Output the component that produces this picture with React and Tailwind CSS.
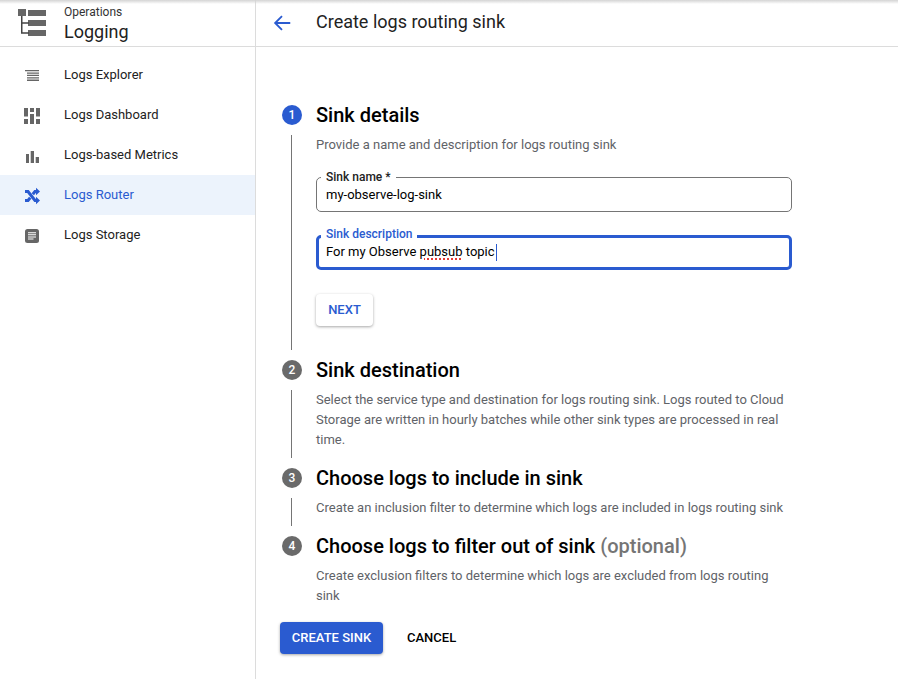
const NAV = [
  { label: 'Logs Explorer', icon: 'explorer' },
  { label: 'Logs Dashboard', icon: 'dashboard' },
  { label: 'Logs-based Metrics', icon: 'metrics' },
  { label: 'Logs Router', icon: 'router', active: true },
  { label: 'Logs Storage', icon: 'storage' },
];

function NavIcon({ name }) {
  const shapes = {
    explorer: <path d="M3 5h14v1.300H3zM5 7.400h12v1.300H5zM5 9.800h12v1.300H5zM5 12.200h12v1.300H5zM5 14.600h12v1.300H5z" />,
    dashboard: <path d="M2 3h4v8.500H2zM2 14h4v5H2zM8 3h4v4H8zM8 9h4v10H8zM14 3h4v8.500h-4zM14 14h4v5h-4z" />,
    metrics: <path d="M4 9h3v9H4zM8.700 6H12v12H8.700zM13.700 12H17v6h-3.300z" />,
    router: (
      <g>
        <path d="M3 6.500h3l7 9h2M3 15.500h3l2.200-2.800M10.800 9.300 13 6.500h2" fill="none" stroke="currentColor" strokeWidth="3" />
        <path d="M14 2.800 18 6.500l-4 3.700zM14 11.800l4 3.700-4 3.700z" />
      </g>
    ),
    storage: (
      <g>
        <rect x="3" y="4" width="14" height="14" rx="2.500" />
        <path d="M6 7.200h8v1H6zM6 9.300h8v1H6zM6 11.400h8v1H6zM6 13.500h5.500v1H6z" fill="#fff" />
      </g>
    ),
  };
  return <svg width="20" height="20" viewBox="0 0 20 20" fill="currentColor">{shapes[name]}</svg>;
}

function Step({ n, title, optional, active, last, children }) {
  return (
    <div className="flex gap-[14px]">
      <div className="flex w-[20px] flex-col items-start">
        <div className={`flex h-[20px] w-[20px] shrink-0 items-center justify-center rounded-full text-[12px] font-medium text-white ${active ? 'bg-[#2a5bd0]' : 'bg-[#6a6a6a]'}`}>{n}</div>
        {!last && <div className="my-[10px] ml-[9px] w-px flex-1 bg-[#757575]" />}
      </div>
      <div className="w-[476px]">
        <h2 className="text-[20px] leading-[20px] font-medium text-black">
          {title}{optional && <span className="text-[#757575]"> (optional)</span>}
        </h2>
        {children}
      </div>
    </div>
  );
}

function Field({ label, value, focused, children }) {
  const box = focused ? 'border-[3px] border-[#2a5bd0] px-[7px] pb-px' : 'border border-[#757575] px-[9px]';
  const tag = focused ? 'top-[-11px] left-[2px] text-[#2a5bd0]' : 'top-[-8px] left-[4px] text-[#222]';
  return (
    <div className={`relative flex h-[35px] items-center rounded-[5px] bg-white text-[13px] text-black ${box}`}>
      <span className={`absolute bg-white px-[5px] text-[12px] leading-[14px] font-medium ${tag}`}>{label}</span>
      {children || value}
    </div>
  );
}

export default function App() {
  return (
    <div className="relative flex h-[679px] w-[898px] overflow-hidden bg-white font-['Roboto',sans-serif] text-[13px] text-[#111]">
      <div className="pointer-events-none absolute inset-x-0 top-0 h-[4px] bg-gradient-to-b from-[#d4d4d4] to-transparent" />
      <aside className="w-[256px] shrink-0 border-r border-[#dcdcdc]">
        <div className="flex h-[47px] items-start border-b border-[#dcdcdc]">
          <svg className="mt-[9px] ml-[18px]" width="28" height="27" viewBox="0 0 28 27" fill="#666">
            <path d="M0 0h8v7H0zM10 1h18v6H10zM10 11h18v6H10zM10 21h18v6H10z" />
            <path d="M3 7h1.500v17.700H3zM3 13.200h8v1.500H3zM3 23.200h8v1.500H3z" fill="#444" />
          </svg>
          <div className="ml-[18px]">
            <div className="pt-[5px] text-[12px] leading-[14px] text-[#333]">Operations</div>
            <div className="mt-px text-[18px] leading-[24px] text-[#222]">Logging</div>
          </div>
        </div>
        <nav className="pt-[8px]">
          {NAV.map((item) => (
            <div key={item.label} className={`flex h-[40px] items-center pl-[22px] ${item.active ? 'bg-[#ecf3fc] text-[#2a5bd0]' : 'text-[#222]'}`}>
              <span className={item.active ? 'text-[#2a5bd0]' : 'text-[#666]'}><NavIcon name={item.icon} /></span>
              <span className="ml-[22px] text-[13px]">{item.label}</span>
            </div>
          ))}
        </nav>
      </aside>
      <main className="flex-1">
        <div className="flex h-[47px] items-center border-b border-[#dcdcdc]">
          <svg className="ml-[15px]" width="22" height="22" viewBox="0 0 24 24" fill="none" stroke="#2a5bd0" strokeWidth="2"><path d="M21 12H5M12 4.500 4.500 12l7.500 7.500" /></svg>
          <h1 className="mb-[3px] ml-[23px] text-[18px] text-[#222]">Create logs routing sink</h1>
        </div>
        <div className="pt-[58px] pl-[26px]">
          <Step n="1" title="Sink details" active>
            <p className="pt-[10px] leading-[20px] text-[#5f6368]">Provide a name and description for logs routing sink</p>
            <div className="mt-[22px] flex flex-col gap-[23px]">
              <Field label="Sink name *" value="my-observe-log-sink" />
              <Field label="Sink description" focused>
                <span>For my Observe <span className="underline decoration-[#e53935] decoration-dotted decoration-2 underline-offset-2">pubsub</span> topic</span>
                <span className="ml-px h-[17px] w-px bg-[#2a5bd0]" />
              </Field>
            </div>
            <button className="mt-[24px] mb-[34px] h-[32px] w-[57px] rounded-[4px] bg-white text-[13px] font-medium text-[#2a5bd0] shadow-[0_1px_3px_rgba(0,0,0,0.35)]">NEXT</button>
          </Step>
          <Step n="2" title="Sink destination">
            <p className="pt-[10px] pb-[18px] leading-[20px] text-[#5f6368]">Select the service type and destination for logs routing sink. Logs routed to Cloud Storage are written in hourly batches while other sink types are processed in real time.</p>
          </Step>
          <Step n="3" title="Choose logs to include in sink">
            <p className="pt-[10px] pb-[18px] leading-[20px] text-[#5f6368]">Create an inclusion filter to determine which logs are included in logs routing sink</p>
          </Step>
          <Step n="4" title="Choose logs to filter out of sink" optional last>
            <p className="pt-[10px] leading-[20px] text-[#5f6368]">Create exclusion filters to determine which logs are excluded from logs routing sink</p>
          </Step>
        </div>
        <div className="mt-[16px] flex items-center pl-[24px]">
          <button className="h-[32px] w-[103px] rounded-[4px] bg-[#2a5bd0] text-[13px] font-medium text-white shadow-[0_1px_3px_rgba(0,0,0,0.35)]">CREATE SINK</button>
          <button className="ml-[24px] text-[13px] font-medium text-black">CANCEL</button>
        </div>
      </main>
    </div>
  );
}
